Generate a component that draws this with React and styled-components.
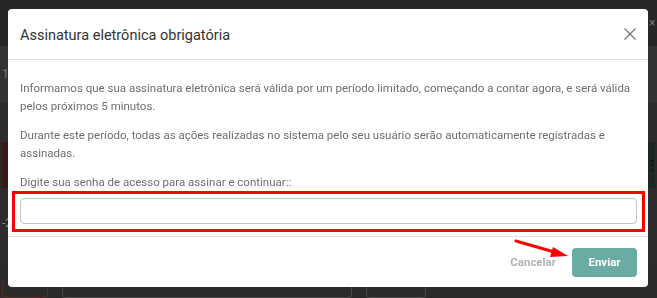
import React from 'react';
import styled, { createGlobalStyle } from 'styled-components';

const GlobalStyle = createGlobalStyle`
  html, body {
    margin: 0;
    padding: 0;
    width: 657px;
    height: 298px;
    overflow: hidden;
    background: #2b2b2b;
    font-family: Roboto, "Liberation Sans", Arial, sans-serif;
  }
  * { box-sizing: border-box; }
`

// dimmed page behind the modal
const Page = styled.div`
  display: flex;
  flex-direction: column;
  width: 657px;
  height: 298px;
`
const Band = styled.div`
  height: ${p => p.h}px;
  background: ${p => p.bg || '#2b2b2b'};
  border-bottom: ${p => p.line ? '1px solid #3a3a3a' : 'none'};
  display: flex;
  justify-content: space-between;
  align-items: center;
  padding: 0 2px;
  color: #8a8a8a;
  font-size: 12px;
`
const Side = styled.div`
  width: ${p => p.w || 8}px;
  height: 100%;
  background: ${p => p.bg || 'transparent'};
  display: flex;
  align-items: center;
  color: ${p => p.fg || '#111'};
  font-weight: ${p => p.fg ? 400 : 700};
`
const Ghost = styled.div`
  height: 16px;
  width: ${p => p.w}px;
  border: 1px solid ${p => p.c || '#4a4a4a'};
  border-top: none;
  border-radius: 0 0 4px 4px;
`
const GhostRow = styled.div`
  display: flex;
  gap: 14px;
  align-items: flex-end;
  height: 100%;
`

const Backdrop = styled.div`
  position: fixed;
  inset: 0;
  padding: 9px 9px 11px 8px;
`

const Modal = styled.div`
  background: #fff;
  border-radius: 4px;
  width: 640px;
  height: 278px;
  display: flex;
  flex-direction: column;
`
const Header = styled.div`
  height: 51px;
  display: flex;
  align-items: center;
  justify-content: space-between;
  padding: 0 11px 0 12px;
  border-bottom: 1px solid #e3e3e3;
`
const Title = styled.h5`
  margin: 0;
  font-size: 14.5px;
  font-weight: 400;
  color: #333;
  padding-top: 2px;
`
const Close = styled.button`
  border: none;
  background: none;
  padding: 0;
  width: 14px;
  height: 14px;
  display: flex;
  cursor: pointer;
`
const Body = styled.div`
  padding: 19px 11px 12px 12px;
  border-bottom: 1px solid #e3e3e3;
`
const Text = styled.p`
  margin: 0 0 11px;
  font-size: 11.5px;
  line-height: 18px;
  color: #6b6f73;
`
const Label = styled.label`
  display: block;
  font-size: 11.5px;
  line-height: 18px;
  color: #6b6f73;
  margin-bottom: 7px;
`
const Field = styled.div`
  position: relative;
`
const Input = styled.input`
  display: block;
  width: 100%;
  height: 26px;
  border: 1px solid #c4c4c4;
  border-radius: 4px;
  outline: none;
`
const Highlight = styled.div`
  position: absolute;
  top: -7px;
  left: -8px;
  right: -8px;
  bottom: -8px;
  border: 3px solid #f00;
  pointer-events: none;
`
const Footer = styled.div`
  position: relative;
  flex: 1;
  display: flex;
  justify-content: flex-end;
  align-items: center;
  gap: 16px;
  padding: 0 11px 0 12px;
`
const Button = styled.button`
  font-family: inherit;
  font-size: 11.5px;
  font-weight: 700;
  border: none;
  border-radius: 4px;
  height: 29px;
  width: ${p => p.primary ? '65px' : 'auto'};
  padding: 0;
  background: ${p => p.primary ? '#6aaba3' : 'transparent'};
  color: ${p => p.primary ? '#fff' : '#b3b3b3'};
  cursor: pointer;
`
const Arrow = styled.svg`
  position: absolute;
  left: 504px;
  top: 2px;
`

export default function App() {
  return (
    <>
      <GlobalStyle />
      <Page>
        <Band h={46} bg="#262626"><Side /><Side w={6} fg="#777">×</Side></Band>
        <Band h={56} bg="#323232" line><Side fg="#777">1</Side><Side /></Band>
        <Band h={40} bg="#2d2d2d" />
        <Band h={46}><Side w={10} bg="#3a1a18" /><Side w={9} bg="#1d2726">⋮</Side></Band>
        <Band h={70} bg="#2c2c2c"><Side fg="#888">-2</Side><Side /></Band>
        <Band h={40} bg="#2b2b2b">
          <GhostRow>
            <Ghost w={46} c="#5a2c28" />
            <Ghost w={290} />
            <Ghost w={60} />
          </GhostRow>
        </Band>
      </Page>
      <Backdrop>
        <Modal>
          <Header>
            <Title>Assinatura eletrônica obrigatória</Title>
            <Close aria-label="Fechar">
              <svg width="14" height="14" viewBox="0 0 14 14">
                <path d="M1.5 1.5 L12.5 12.5 M12.5 1.5 L1.5 12.5" stroke="#777" strokeWidth="1.3" fill="none" />
              </svg>
            </Close>
          </Header>
          <Body>
            <Text>Informamos que sua assinatura eletrônica será válida por um período limitado, começando a contar agora, e será válida pelos próximos 5 minutos.</Text>
            <Text>Durante este período, todas as ações realizadas no sistema pelo seu usuário serão automaticamente registradas e assinadas.</Text>
            <Label>Digite sua senha de acesso para assinar e continuar::</Label>
            <Field>
              <Input type="password" />
              <Highlight />
            </Field>
          </Body>
          <Footer>
            <Arrow width="64" height="24" viewBox="0 0 64 24">
              <path d="M4 2 L46 14" stroke="#f00" strokeWidth="3" strokeLinecap="round" />
              <path d="M41 8 L56 17 L38 18 Z" fill="#f00" />
            </Arrow>
            <Button>Cancelar</Button>
            <Button primary>Enviar</Button>
          </Footer>
        </Modal>
      </Backdrop>
    </>
  );
}
